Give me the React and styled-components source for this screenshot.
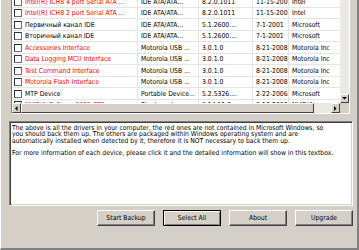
import React from 'react';
import styled, { createGlobalStyle } from 'styled-components';

const UI_FONT = '"DejaVu Sans Condensed", "DejaVu Sans", "Liberation Sans", sans-serif';

const Global = createGlobalStyle`
  html, body { margin: 0; padding: 0; background: #d4d0c8; }
  body { font-family: ${UI_FONT}; font-stretch: condensed; }
`;

const Window = styled.div`
  width: 359px;
  height: 250px;
  box-sizing: border-box;
  overflow: hidden;
  background: #d4d0c8;
  padding: 0 7px 0 8px;
  display: flex;
  flex-direction: column;
  border-left: 1px solid #ffffff;
  border-right: 2px solid #808080;
  border-bottom: 2px solid #808080;
`;

const ListView = styled.div`
  margin-left: 2px;
  width: 339px;
  height: 114px;
  box-sizing: border-box;
  border-left: 1px solid #808080;
  border-right: 1px solid #ffffff;
  border-bottom: 1px solid #ffffff;
  display: grid;
  grid-template-columns: 328px 9px;
  grid-template-rows: 103px 10px;
`;

const Viewport = styled.div`
  background: #ffffff;
  overflow: hidden;
`;

const Rows = styled.div`
  margin-top: -3.6px;
`;

const Row = styled.div`
  display: grid;
  grid-template-columns: 126px 61px 54px 36px 55px;
  height: 11.5px;
  box-sizing: border-box;
  border-bottom: 1px solid #e4e4e4;
  font-size: 6.8px;
  color: ${p => (p.$red ? '#ff0000' : '#000000')};
`;

const Cell = styled.div`
  display: flex;
  align-items: center;
  gap: 3px;
  padding-top: 0.5px;
  padding-left: ${p => (p.$first ? '2px' : '3px')};
  border-right: 1px solid #e4e4e4;
  white-space: nowrap;
  overflow: hidden;
  color: ${p => (p.$plain ? '#000000' : 'inherit')};
`;

const Check = styled.span`
  flex: none;
  width: 8px;
  height: 8px;
  box-sizing: border-box;
  background: #ffffff;
  border: 1px solid #303030;
  border-right-color: #707070;
  border-bottom-color: #707070;
`;

const VScroll = styled.div`
  background: #ebe9e5;
  display: flex;
  flex-direction: column;
  justify-content: flex-end;
`;

const HScroll = styled.div`
  background: #ebe9e5;
  display: flex;
`;

const Corner = styled.div`
  background: #d4d0c8;
`;

const ArrowBtn = styled.div`
  flex: none;
  width: 9px;
  height: ${p => (p.$h ? '10px' : '9px')};
  box-sizing: border-box;
  background: #d4d0c8;
  border: 1px solid;
  border-color: #ffffff #404040 #404040 #ffffff;
  display: flex;
  align-items: center;
  justify-content: center;
  svg { display: block; }
`;

const Thumb = styled.div`
  flex: none;
  width: 293px;
  box-sizing: border-box;
  background: #d4d0c8;
  border: 1px solid;
  border-color: #ffffff #404040 #404040 #ffffff;
`;

const Track = styled.div`
  flex: 1;
`;

const TextBox = styled.div`
  margin-top: 7px;
  width: 344px;
  height: 85px;
  box-sizing: border-box;
  background: #ffffff;
  border: 1px solid;
  border-color: #808080 #ffffff #ffffff #808080;
  box-shadow: inset 1px 1px 0 #404040, inset -1px -1px 0 #d4d0c8;
  padding: 3px 2px;
  font-size: 6.75px;
  line-height: 6.25px;
  color: #000;
  white-space: nowrap;
  overflow: hidden;
`;

const Para = styled.p`
  margin: 0 0 6.25px 0;
`;

const ButtonBar = styled.div`
  margin-top: 4px;
  width: 344px;
  display: flex;
  justify-content: flex-end;
  gap: 8px;
`;

const Button = styled.button`
  width: 58px;
  height: 16px;
  box-sizing: border-box;
  padding: 0;
  margin: 0;
  font-family: ${UI_FONT};
  font-stretch: condensed;
  font-size: 6.8px;
  color: #000;
  background: #d4d0c8;
  border: 1px solid;
  border-color: ${p => (p.$default ? '#000000' : '#ffffff #404040 #404040 #ffffff')};
  box-shadow: ${p =>
    p.$default
      ? 'inset 1px 1px 0 #ffffff, inset -1px -1px 0 #808080'
      : 'inset -1px -1px 0 #808080'};
`;

const rows = [
  { red: true, name: 'Intel(R) ICH8 4 port Serial ATA ...', type: 'IDE ATA/ATA...', ver: '8.2.0.1011', date: '11-15-2006', prov: 'Intel' },
  { red: true, name: 'Intel(R) ICH8 2 port Serial ATA ...', type: 'IDE ATA/ATA...', ver: '8.2.0.1011', date: '11-15-2006', prov: 'Intel' },
  { red: false, name: 'Первичный канал IDE', type: 'IDE ATA/ATA...', ver: '5.1.2600....', date: '7-1-2001', prov: 'Microsoft' },
  { red: false, name: 'Вторичный канал IDE', type: 'IDE ATA/ATA...', ver: '5.1.2600....', date: '7-1-2001', prov: 'Microsoft' },
  { red: true, name: 'Accessories Interface', type: 'Motorola USB ...', ver: '3.0.1.0', date: '8-21-2008', prov: 'Motorola Inc' },
  { red: true, name: 'Data Logging MCU Interface', type: 'Motorola USB ...', ver: '3.0.1.0', date: '8-21-2008', prov: 'Motorola Inc' },
  { red: true, name: 'Test Command Interface', type: 'Motorola USB ...', ver: '3.0.1.0', date: '8-21-2008', prov: 'Motorola Inc' },
  { red: true, name: 'Motorola Flash Interface', type: 'Motorola USB ...', ver: '3.0.1.0', date: '8-21-2008', prov: 'Motorola Inc' },
  { red: false, name: 'MTP Device', type: 'Portable Device...', ver: '5.2.5326....', date: '2-22-2006', prov: 'Microsoft' },
  { red: true, name: 'NVIDIA GeForce 9300 GTS...', type: 'Display ada...', ver: '6.14.11.8...', date: '9-18-2008', prov: 'NVIDIA' },
];

const Tri = ({ dir }) => {
  const pts = {
    down: '0,0 5,0 2.5,2.5',
    left: '2.5,0 2.5,5 0,2.5',
    right: '0,0 0,5 2.5,2.5',
  }[dir];
  const w = dir === 'down' ? 5 : 3;
  const h = dir === 'down' ? 3 : 5;
  return (
    <svg width={w} height={h} viewBox={`0 0 ${w} ${h}`}>
      <polygon points={pts} fill="#000" />
    </svg>
  );
};

export default function App() {
  return (
    <>
      <Global />
      <Window>
        <ListView>
          <Viewport>
            <Rows>
              {rows.map((r, i) => (
                <Row key={i} $red={r.red}>
                  <Cell $first>
                    <Check />
                    {r.name}
                  </Cell>
                  <Cell $plain>{r.type}</Cell>
                  <Cell $plain>{r.ver}</Cell>
                  <Cell $plain>{r.date}</Cell>
                  <Cell $plain>{r.prov}</Cell>
                </Row>
              ))}
            </Rows>
          </Viewport>
          <VScroll>
            <ArrowBtn>
              <Tri dir="down" />
            </ArrowBtn>
          </VScroll>
          <HScroll>
            <ArrowBtn $h>
              <Tri dir="left" />
            </ArrowBtn>
            <Thumb />
            <Track />
            <ArrowBtn $h>
              <Tri dir="right" />
            </ArrowBtn>
          </HScroll>
          <Corner />
        </ListView>
        <TextBox>
          <Para>
            The above is all the drivers in your computer, the red ones are not contained in Microsoft Windows, so
            <br />
            you should back them up. The others are packaged within Windows operating system and are
            <br />
            automatically installed when detected by it, therefore it is NOT necessary to back them up.
          </Para>
          <Para>
            For more information of each device, please click it and the detailed information will show in this textbox.
          </Para>
        </TextBox>
        <ButtonBar>
          <Button>Start Backup</Button>
          <Button $default>Select All</Button>
          <Button>About</Button>
          <Button>Upgrade</Button>
        </ButtonBar>
      </Window>
    </>
  );
}
